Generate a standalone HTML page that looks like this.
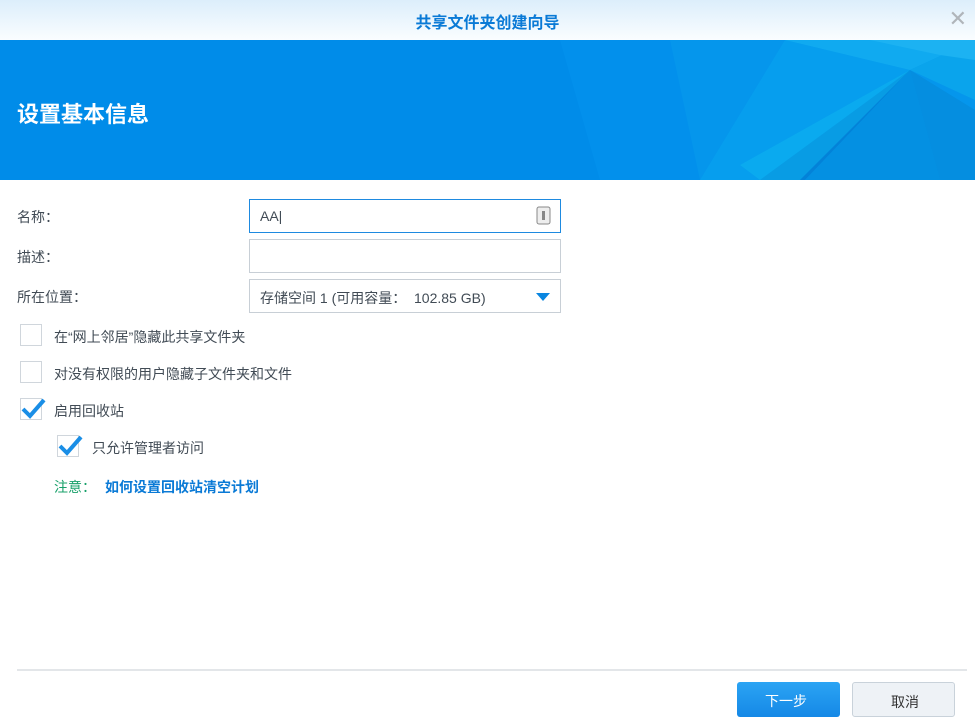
<!DOCTYPE html>
<html><head><meta charset="utf-8"><style>
*{margin:0;padding:0;box-sizing:border-box}
body{width:975px;height:721px;background:#fff;font-family:"Liberation Sans","Noto Sans CJK SC",sans-serif;position:relative;overflow:hidden;color:#414b55}
.top{position:absolute;left:0;top:0;width:975px;height:40px;background:linear-gradient(#dceefb,#fafdff)}
.title{position:absolute;top:9px;width:975px;text-align:center;color:#0a7ad6;font-size:16px;font-weight:bold}
.x{position:absolute;right:8px;top:6px;color:#b0b5ba;font-size:22px}
.banner{position:absolute;left:0;top:40px;width:975px;height:140px;background:#008ce9;overflow:hidden}
.banner h1{position:absolute;left:17px;top:57px;color:#fff;font-size:22px;font-weight:bold}
.lbl{position:absolute;left:17px;font-size:14px}
.inp{position:absolute;left:249px;width:312px;height:34px;border:1px solid #c8cfd6;font-size:14px;padding:8px 10px}
.cb{position:absolute;width:22px;height:22px;border:1px solid #d0d6dc;background:#fff}
.ct{position:absolute;font-size:14px}
.ck{position:absolute;left:-2px;top:-4px}
</style></head><body>
<div class="top"><div class="title">共享文件夹创建向导</div><div class="x">✕</div></div>
<div class="banner">
<svg width="975" height="140" style="position:absolute;left:0;top:0">
<polygon points="560,0 975,0 975,140 600,140" fill="#0290ec"/>
<polygon points="670,0 975,0 975,140 700,140" fill="#0596ec"/>
<polygon points="785,0 910,30 760,140 700,140" fill="#069eee"/>
<polygon points="910,30 760,140 805,140" fill="#0382d8"/>
<polygon points="910,30 805,140 940,140" fill="#0490e2"/>
<polygon points="910,30 940,140 975,140 975,70" fill="#058ee0"/>
<polygon points="785,0 910,30 975,0" fill="#10aaf0"/>
<polygon points="910,30 975,0 975,60" fill="#0aa4ec"/>
<polygon points="870,0 975,0 975,20 940,15" fill="#1cb2f2"/>
<polygon points="740,125 910,30 800,140 760,140" fill="#0db6f0" opacity=".5"/>
</svg>
<h1>设置基本信息</h1></div>
<div class="lbl" style="top:207px">名称：</div>
<div class="inp" style="top:199px;border-color:#1e8ae0;color:#414b55">AA|
<svg width="16" height="20" style="position:absolute;right:8px;top:6px"><rect x="1" y="1" width="13" height="17" rx="2" fill="#eee" stroke="#888"/><rect x="6" y="5" width="3" height="9" fill="#888"/></svg></div>
<div class="lbl" style="top:247px">描述：</div>
<div class="inp" style="top:239px"></div>
<div class="lbl" style="top:287px">所在位置：</div>
<div class="inp" style="top:279px">存储空间 1 (可用容量：&nbsp; 102.85 GB)
<svg width="14" height="8" style="position:absolute;right:10px;top:13px"><polygon points="0,0 14,0 7,8" fill="#0a86e0"/></svg></div>
<div class="cb" style="left:20px;top:324px"></div><div class="ct" style="left:54px;top:327px">在“网上邻居”隐藏此共享文件夹</div>
<div class="cb" style="left:20px;top:361px"></div><div class="ct" style="left:54px;top:364px">对没有权限的用户隐藏子文件夹和文件</div>
<div class="cb" style="left:20px;top:398px"><svg class="ck" width="28" height="24"><path d="M4 14 L11 21 L25 5" stroke="#1a8ee6" stroke-width="4" fill="none"/></svg></div><div class="ct" style="left:54px;top:401px">启用回收站</div>
<div class="cb" style="left:57px;top:435px"><svg class="ck" width="28" height="24"><path d="M4 14 L11 21 L25 5" stroke="#1a8ee6" stroke-width="4" fill="none"/></svg></div><div class="ct" style="left:92px;top:438px">只允许管理者访问</div>
<div class="ct" style="left:54px;top:477px;color:#18a06a">注意：</div>
<div class="ct" style="left:105px;top:477px;color:#0a7ad6;font-weight:bold">如何设置回收站清空计划</div>
<div style="position:absolute;left:17px;top:669px;width:950px;height:2px;background:#e3e6e9"></div>
<div style="position:absolute;left:737px;top:682px;width:103px;height:35px;background:linear-gradient(#2ba4f4,#1588e6);border-radius:3px;color:#fff;font-size:14px;padding:9px 0 0 28px">下一步</div>
<div style="position:absolute;left:852px;top:682px;width:103px;height:35px;background:#eef2f6;border:1px solid #c9d2da;border-radius:3px;font-size:14px;padding:9px 0 0 38px;color:#333">取消</div>
</body></html>
